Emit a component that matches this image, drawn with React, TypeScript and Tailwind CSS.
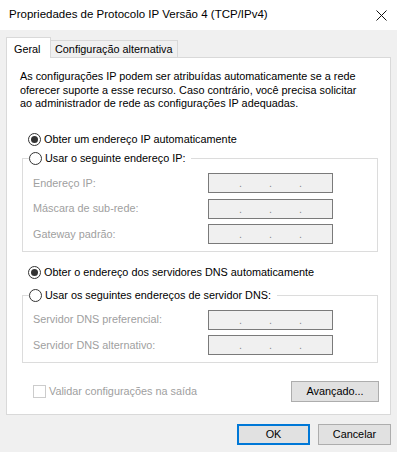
const body = "font-['Liberation_Sans',Arial,sans-serif] text-[10.85px]";

function Radio({ checked }: { checked?: boolean }) {
  return (
    <span className="flex h-[13px] w-[13px] shrink-0 items-center justify-center rounded-full border border-[#333333] bg-white">
      {checked && <span className="h-[7px] w-[7px] rounded-full bg-[#333333]" />}
    </span>
  );
}

function IpBox() {
  return (
    <div className="flex h-[20px] w-[125px] items-end border border-[#7a7a7a] bg-[#f0f0f0] pb-[3px] text-[#8a8a8a] leading-[11px]">
      <span className="ml-[30px]">.</span>
      <span className="ml-[27px]">.</span>
      <span className="ml-[27px]">.</span>
    </div>
  );
}

function Field({ label }: { label: string }) {
  return (
    <div className="flex items-center">
      <span className="w-[175px] text-[#a0a0a0]">{label}</span>
      <IpBox />
    </div>
  );
}

function Group({ legend, fields }: { legend: string; fields: string[] }) {
  return (
    <fieldset className="ml-[15px] w-[356px] border border-[#dcdcdc] pb-[7px] pl-[10px]">
      <legend className="-ml-[4px] flex h-[16px] items-center gap-[3px] pr-[6px]">
        <Radio />
        <span>{legend}</span>
      </legend>
      <div className="mt-[6.5px] flex flex-col gap-[5.5px]">
        {fields.map((f) => (
          <Field key={f} label={f} />
        ))}
      </div>
    </fieldset>
  );
}

function Button({ children, primary, w }: { children: string; primary?: boolean; w: string }) {
  return (
    <button
      className={
        primary
          ? `flex h-[21px] ${w} items-center justify-center border-2 border-[#0078d7] bg-[#e1e1e1]`
          : `flex h-[21px] ${w} items-center justify-center border border-[#adadad] bg-[#e1e1e1]`
      }
    >
      {children}
    </button>
  );
}

export default function App() {
  return (
    <div className={`flex h-[452px] w-[397px] flex-col bg-[#f0f0f0] text-black ${body}`}>
      {/* title bar */}
      <div className="flex h-[30px] shrink-0 items-center justify-between bg-white pl-[9px] pr-[10px]">
        <span className="font-['Liberation_Sans',Arial,sans-serif] text-[11.5px]">
          Propriedades de Protocolo IP Versão 4 (TCP/IPv4)
        </span>
        <svg width="11" height="11" viewBox="0 0 11 11">
          <path d="M0.5 0.5 L10.5 10.5 M10.5 0.5 L0.5 10.5" stroke="#111" strokeWidth="1" />
        </svg>
      </div>

      {/* tabs */}
      <div className="mt-[7px] flex items-end pl-[6px]">
        <div className="relative z-10 -mb-px flex h-[21px] w-[45px] items-start border border-b-0 border-[#d9d9d9] bg-white pl-[7px] pt-[3px]">
          Geral
        </div>
        <div className="flex h-[17px] w-[127px] items-center border border-b-0 border-l-0 border-[#d9d9d9] pl-[4px]">
          Configuração alternativa
        </div>
      </div>

      {/* panel */}
      <div className="mx-[6px] flex h-[358px] flex-col border border-[#d9d9d9] bg-white">
        <p className="ml-[13px] mt-[12px] leading-[13.5px]">
          As configurações IP podem ser atribuídas automaticamente se a rede
          <br />
          oferecer suporte a esse recurso. Caso contrário, você precisa solicitar
          <br />
          ao administrador de rede as configurações IP adequadas.
        </p>

        <div className="ml-[21px] mt-[21px] flex h-[16px] items-center gap-[3px]">
          <Radio checked />
          <span>Obter um endereço IP automaticamente</span>
        </div>

        <div className="mt-[3px]">
          <Group legend="Usar o seguinte endereço IP:" fields={["Endereço IP:", "Máscara de sub-rede:", "Gateway padrão:"]} />
        </div>

        <div className="ml-[21px] mt-[12px] flex h-[16px] items-center gap-[3px]">
          <Radio checked />
          <span>Obter o endereço dos servidores DNS automaticamente</span>
        </div>

        <div className="mt-[7px]">
          <Group
            legend="Usar os seguintes endereços de servidor DNS:"
            fields={["Servidor DNS preferencial:", "Servidor DNS alternativo:"]}
          />
        </div>

        <div className="mt-[18px] flex items-center justify-between pl-[26px] pr-[11px]">
          <div className="flex items-center gap-[3px]">
            <span className="h-[13px] w-[13px] border border-[#cccccc] bg-white" />
            <span className="text-[#a0a0a0]">Validar configurações na saída</span>
          </div>
          <Button w="w-[88px]">Avançado...</Button>
        </div>
      </div>

      {/* footer */}
      <div className="mt-[9px] flex justify-end gap-[8px] pr-[6px]">
        <Button primary w="w-[73px]">OK</Button>
        <Button w="w-[73px]">Cancelar</Button>
      </div>
    </div>
  );
}
